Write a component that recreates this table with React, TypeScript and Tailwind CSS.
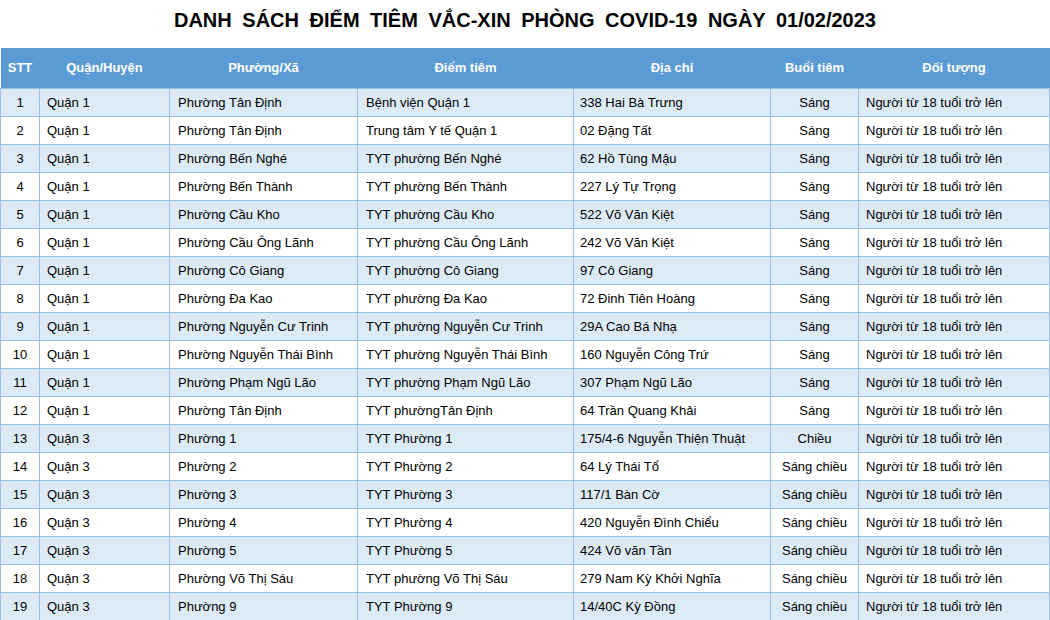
import React from 'react';

type Row = [string, string, string, string, string, string];

const rows: Row[] = [
  ['Quận 1', 'Phường Tân Định', 'Bệnh viện Quận 1', '338 Hai Bà Trưng', 'Sáng', 'Người từ 18 tuổi trở lên'],
  ['Quận 1', 'Phường Tân Định', 'Trung tâm Y tế Quận 1', '02 Đặng Tất', 'Sáng', 'Người từ 18 tuổi trở lên'],
  ['Quận 1', 'Phường Bến Nghé', 'TYT phường Bến Nghé', '62 Hồ Tùng Mậu', 'Sáng', 'Người từ 18 tuổi trở lên'],
  ['Quận 1', 'Phường Bến Thành', 'TYT phường Bến Thành', '227 Lý Tự Trọng', 'Sáng', 'Người từ 18 tuổi trở lên'],
  ['Quận 1', 'Phường Cầu Kho', 'TYT phường Cầu Kho', '522 Võ Văn Kiệt', 'Sáng', 'Người từ 18 tuổi trở lên'],
  ['Quận 1', 'Phường Cầu Ông Lãnh', 'TYT phường Cầu Ông Lãnh', '242 Võ Văn Kiệt', 'Sáng', 'Người từ 18 tuổi trở lên'],
  ['Quận 1', 'Phường Cô Giang', 'TYT phường Cô Giang', '97 Cô Giang', 'Sáng', 'Người từ 18 tuổi trở lên'],
  ['Quận 1', 'Phường Đa Kao', 'TYT phường Đa Kao', '72 Đinh Tiên Hoàng', 'Sáng', 'Người từ 18 tuổi trở lên'],
  ['Quận 1', 'Phường Nguyễn Cư Trinh', 'TYT phường Nguyễn Cư Trinh', '29A Cao Bá Nhạ', 'Sáng', 'Người từ 18 tuổi trở lên'],
  ['Quận 1', 'Phường Nguyễn Thái Bình', 'TYT phường Nguyễn Thái Bình', '160 Nguyễn Công Trứ', 'Sáng', 'Người từ 18 tuổi trở lên'],
  ['Quận 1', 'Phường Phạm Ngũ Lão', 'TYT phường Phạm Ngũ Lão', '307 Phạm Ngũ Lão', 'Sáng', 'Người từ 18 tuổi trở lên'],
  ['Quận 1', 'Phường Tân Định', 'TYT phườngTân Định', '64 Trần Quang Khải', 'Sáng', 'Người từ 18 tuổi trở lên'],
  ['Quận 3', 'Phường 1', 'TYT Phường 1', '175/4-6 Nguyễn Thiện Thuật', 'Chiều', 'Người từ 18 tuổi trở lên'],
  ['Quận 3', 'Phường 2', 'TYT Phường 2', '64 Lý Thái Tổ', 'Sáng chiều', 'Người từ 18 tuổi trở lên'],
  ['Quận 3', 'Phường 3', 'TYT Phường 3', '117/1 Bàn Cờ', 'Sáng chiều', 'Người từ 18 tuổi trở lên'],
  ['Quận 3', 'Phường 4', 'TYT Phường 4', '420 Nguyễn Đình Chiểu', 'Sáng chiều', 'Người từ 18 tuổi trở lên'],
  ['Quận 3', 'Phường 5', 'TYT Phường 5', '424 Võ văn Tần', 'Sáng chiều', 'Người từ 18 tuổi trở lên'],
  ['Quận 3', 'Phường Võ Thị Sáu', 'TYT phường Võ Thị Sáu', '279 Nam Kỳ Khởi Nghĩa', 'Sáng chiều', 'Người từ 18 tuổi trở lên'],
  ['Quận 3', 'Phường 9', 'TYT Phường 9', '14/40C Kỳ Đồng', 'Sáng chiều', 'Người từ 18 tuổi trở lên'],
];

const headers = ['STT', 'Quận/Huyện', 'Phường/Xã', 'Điểm tiêm', 'Địa chỉ', 'Buổi tiêm', 'Đối tượng'];

const App: React.FC = () => {
  return (
    <div className="w-[1050px] h-[620px] overflow-hidden bg-white text-black font-['Liberation_Sans',Arial,sans-serif]">
      <h1 className="h-[48px] pt-[8px] text-center text-[20px] font-bold leading-[24px] [word-spacing:5px]">
        DANH SÁCH ĐIỂM TIÊM VẮC-XIN PHÒNG COVID-19 NGÀY 01/02/2023
      </h1>
      <table className="table-fixed border-collapse w-[1049px] text-[13px]">
        <colgroup>
          <col className="w-[39px]" />
          <col className="w-[130px]" />
          <col className="w-[188px]" />
          <col className="w-[216px]" />
          <col className="w-[197px]" />
          <col className="w-[88px]" />
          <col className="w-[191px]" />
        </colgroup>
        <thead>
          <tr className="bg-[#5b9bd5] text-white h-[40px]">
            {headers.map((h) => (
              <th key={h} className="font-bold text-center p-0">{h}</th>
            ))}
          </tr>
        </thead>
        <tbody>
          {rows.map((r, i) => (
            <tr key={i} className={`h-[28px] ${i % 2 === 0 ? 'bg-[#ddebf7]' : 'bg-white'}`}>
              <td className="border border-[#9bc2e6] text-center p-0 pt-[2px]">{i + 1}</td>
              <td className="border border-[#9bc2e6] p-0 pt-[2px] pl-[7px]">{r[0]}</td>
              <td className="border border-[#9bc2e6] p-0 pt-[2px] pl-[8px]">{r[1]}</td>
              <td className="border border-[#9bc2e6] p-0 pt-[2px] pl-[8px]">{r[2]}</td>
              <td className="border border-[#9bc2e6] p-0 pt-[2px] pl-[6px]">{r[3]}</td>
              <td className="border border-[#9bc2e6] text-center p-0 pt-[2px]">{r[4]}</td>
              <td className="border border-[#9bc2e6] p-0 pt-[2px] pl-[7px]">{r[5]}</td>
            </tr>
          ))}
        </tbody>
      </table>
    </div>
  );
};

export default App;
